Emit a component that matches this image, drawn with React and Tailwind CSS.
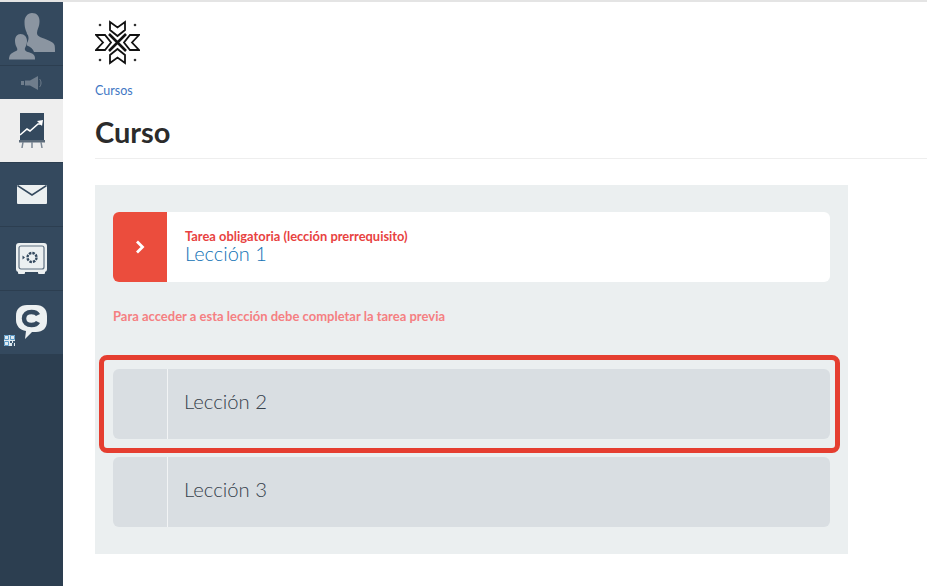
import React from 'react'

const Avatar = () => (
  <svg width="48" height="48" viewBox="0 0 48 48" fill="#8b95a1">
    <path d="M24 1c5 0 7.500 3.500 7.500 8 0 3-.5 5-1.500 7.500-.5 1.500-1 3-1 4.500 0 3 3 4 7 5.500 5 2 9.500 3.500 10.500 6.500.5 2 .5 4.500.5 7H26c-1-3-3-5-7-6.500V31c2-3 2-7 0-9 0-1-.5-2-1-3-1-3-1.500-5-1.500-9 0-5 3-9 7.500-9z" />
    <path d="M12.500 22c4 0 6.500 3 6.500 7 0 3-1 5-2 7-.5 1.500 0 2.500 1.500 3.500 3 1 7.500 2 8 4.500.5 1 .5 2 .5 3.500H1c0-2 .5-3.500 1-4.500 1-2 4-3 6-4 1.500-.5 1.500-1.500 1-3-1-2-2-4-2-7 0-4 2-7 5.500-7z" />
  </svg>
)

const Speaker = () => (
  <svg width="22" height="14" viewBox="0 0 22 14" fill="#6f7d8c">
    <rect x="0" y="5" width="3" height="4" />
    <path d="M4 4.500h5L17 0v14L9 9.500H4z" />
    <path d="M18.500 3c2 2 2 6 0 8" fill="none" stroke="#6f7d8c" strokeWidth="1" />
  </svg>
)

const ChartBoard = () => (
  <svg width="26" height="36" viewBox="0 0 26 36">
    <rect x="1" y="0" width="24" height="27" fill="#34495e" />
    <path d="M1 22l7-6 3 2 8-7 3 0" fill="none" stroke="#fff" strokeWidth="1.600" />
    <path d="M18 8l6-1-1 6z" fill="#fff" />
    <rect x="0" y="27" width="26" height="2.500" fill="#5c6b7a" />
    <path d="M4 29l-1 6M13 29v6M22 29l1 6" stroke="#7b8794" strokeWidth="1.500" />
  </svg>
)

const Mail = () => (
  <svg width="30" height="19" viewBox="0 0 30 19">
    <rect width="30" height="19" rx="1" fill="#ecf0f1" />
    <path d="M0.500 0.500L15 10 29.500 0.500" fill="none" stroke="#34495e" strokeWidth="1.500" />
  </svg>
)

const Safe = () => (
  <svg width="31" height="31" viewBox="0 0 31 31">
    <rect width="31" height="29" rx="3" fill="#ecf0f1" />
    <rect x="2" y="27" width="7" height="4" rx="1" fill="#ecf0f1" />
    <rect x="22" y="27" width="7" height="4" rx="1" fill="#ecf0f1" />
    <rect x="3" y="3" width="25" height="23" rx="2" fill="none" stroke="#5f7182" strokeWidth="1.200" />
    <circle cx="16" cy="14.500" r="4.500" fill="none" stroke="#34495e" strokeWidth="2.400" strokeDasharray="2.500 1" />
    <path d="M6.500 12.500l2.500 2-2.500 2z" fill="#34495e" />
  </svg>
)

const Chat = () => (
  <svg width="31" height="35" viewBox="0 0 31 35">
    <path d="M11 0h9c7 0 11 4 11 11v5c0 7-4 11-11 11h-4l-7 7 1-8C4 25 0 21 0 15v-4C0 4 4 0 11 0z" fill="#ecf0f1" />
    <path d="M22 10c-1-2-3-3-6.500-3C11 7 8 9.500 8 13.500S11 20 15.500 20c3.500 0 5.500-1 6.500-3" fill="none" stroke="#34495e" strokeWidth="4.500" />
  </svg>
)

const Qr = () => (
  <svg width="11" height="11" viewBox="0 0 11 11" className="absolute left-[4px] bottom-[8px]">
    <rect width="11" height="11" fill="#dfe9f0" />
    <path d="M0.500 0.500h4v4h-4zM6.500 0.500h4v4h-4zM0.500 6.500h4v4h-4z" fill="none" stroke="#5b9bc8" />
    <path d="M6 6h2v2H6zM9 6h2v2H9zM8 8h2v3H8z" fill="#3d5a73" />
  </svg>
)

const Logo = () => (
  <svg width="45" height="45" viewBox="0 0 45 45" fill="none" stroke="#111" strokeWidth="1.800" strokeLinejoin="miter">
    <path d="M15 2l7.500 5.500L30 2v8l-7.500 6L15 10zM15 43l7.500-5.500L30 43v-8l-7.500-6L15 35zM1 15l7 7.500L1 30h9l6-7.500L10 15zM44 15l-7 7.500 7 7.500h-9l-6-7.500 6-7.500z" />
    <path d="M14 14l17 17M31 14L14 31" strokeWidth="2.600" />
    <g fill="#333" stroke="none">
      <circle cx="5" cy="5" r="1.300" />
      <circle cx="40" cy="5" r="1.300" />
      <circle cx="5" cy="40" r="1.300" />
      <circle cx="40" cy="40" r="1.300" />
    </g>
  </svg>
)

const NavItem = ({ children, active }) => (
  <div className={`relative flex h-[64px] items-center justify-center border-b border-[#2c3e50] ${active ? 'bg-[#eeeeee]' : ''}`}>
    {children}
  </div>
)

const LockedLesson = ({ title }) => (
  <div className="flex h-[70px] items-stretch rounded-md bg-[#d9dee2]">
    <div className="w-[55px] border-r border-[#f2f4f5]" />
    <div className="flex items-center pb-[6px] pl-[16px] text-[20.300px] font-light text-[#36414c]">{title}</div>
  </div>
)

export default function App() {
  return (
    <div className="flex min-h-[586px] w-[927px] flex-col overflow-hidden bg-white font-['Lato',sans-serif]">
      <div className="h-[2px] bg-[#e4e4e4]" />
      <div className="flex flex-1">
        <aside className="w-[63px] shrink-0 bg-[#2c3e50]">
          <div className="flex h-[64px] items-end justify-center overflow-hidden border-b border-[#2c3e50] bg-[#34495e] pb-[5px]">
            <Avatar />
          </div>
          <div className="flex h-[33px] items-center justify-center bg-[#34495e]">
            <Speaker />
          </div>
          <div className="bg-[#34495e]">
            <NavItem active><ChartBoard /></NavItem>
            <NavItem><Mail /></NavItem>
            <NavItem><Safe /></NavItem>
            <NavItem><Chat /><Qr /></NavItem>
          </div>
        </aside>

        <main className="flex-1 pl-[32px] pt-[18px]">
          <Logo />
          <div className="mt-[18px] text-[12.500px] leading-[16px] text-[#3f77c4]">Cursos</div>
          <h1 className="mt-[14px] border-b border-[#eeeeee] pb-[8px] text-[29px] font-bold leading-[37px] text-[#2b2b2b]">Curso</h1>

          <section className="mt-[26px] h-[369px] w-[753px] bg-[#ebeff0] px-[18px] pt-[27px]">
            <div className="flex h-[70px] items-stretch overflow-hidden rounded-md bg-white">
              <div className="flex w-[54px] items-center justify-center bg-[#eb4d3d]">
                <svg width="10" height="14" viewBox="0 0 10 14" fill="none" stroke="#fff" strokeWidth="2.800">
                  <path d="M2 1.500l5.500 5.500L2 12.500" />
                </svg>
              </div>
              <div className="flex flex-col justify-center pb-[2px] pl-[18px]">
                <div className="text-[12.900px] font-bold leading-[14px] text-[#e8423f]">Tarea obligatoria (lección prerrequisito)</div>
                <div className="text-[20px] font-light leading-[20px] text-[#1272b5]">Lección 1</div>
              </div>
            </div>

            <p className="mt-[27px] text-[13px] font-bold leading-[14px] text-[#f57f82]">Para acceder a esta lección debe completar la tarea previa</p>

            <div className="relative mt-[46px]">
              <LockedLesson title="Lección 2" />
              <div className="absolute -left-[14px] -right-[10px] -top-[14px] -bottom-[14px] rounded-[8px] border-[5px] border-[#e53e30]" />
            </div>
            <div className="mt-[18px]">
              <LockedLesson title="Lección 3" />
            </div>
          </section>
        </main>
      </div>
    </div>
  )
}
